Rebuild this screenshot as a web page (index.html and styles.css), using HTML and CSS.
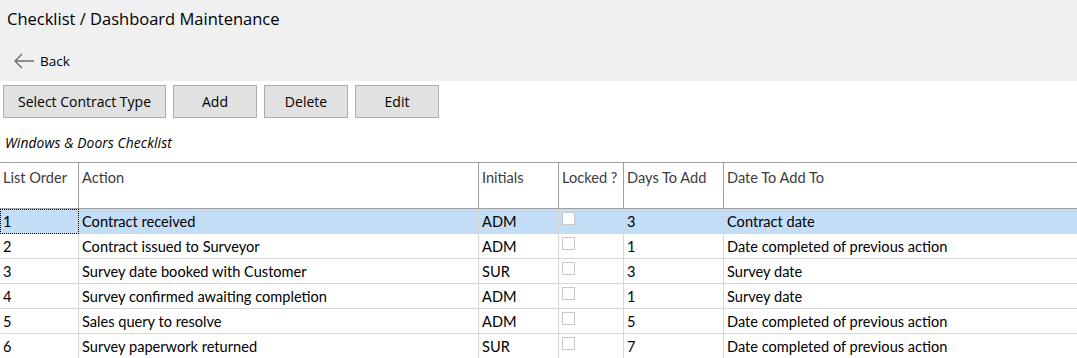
FILE: index.html
```html
<!DOCTYPE html>
<html lang="en">

<head>
    <meta charset="UTF-8">
    <title>Checklist / Dashboard Maintenance</title>
    <link rel="stylesheet" href="styles.css">
</head>

<body>

    <div class="page-header">
        <h1 class="page-title">Checklist / Dashboard Maintenance</h1>
        <a class="back-link" href="#">
            <svg width="22" height="16" viewBox="0 0 22 16">
                <path d="M21 8H2M9 1L2 8l7 7" fill="none" stroke="#6e6e6e" stroke-width="1.4"/>
            </svg>
            <span>Back</span>
        </a>
    </div>

    <div class="toolbar">
        <button class="btn btn-wide">Select Contract Type</button>
        <button class="btn">Add</button>
        <button class="btn">Delete</button>
        <button class="btn">Edit</button>
    </div>

    <p class="caption">Windows &amp; Doors Checklist</p>

    <table class="grid">
        <thead>
            <tr>
                <th class="col-order">List Order</th>
                <th class="col-action">Action</th>
                <th class="col-initials">Initials</th>
                <th class="col-locked">Locked ?</th>
                <th class="col-days">Days To Add</th>
                <th class="col-date">Date To Add To</th>
            </tr>
        </thead>
        <tbody>
            <tr class="selected">
                <td class="focus">1</td>
                <td>Contract received</td>
                <td>ADM</td>
                <td><span class="check"></span></td>
                <td>3</td>
                <td>Contract date</td>
            </tr>
            <tr>
                <td>2</td>
                <td>Contract issued to Surveyor</td>
                <td>ADM</td>
                <td><span class="check"></span></td>
                <td>1</td>
                <td>Date completed of previous action</td>
            </tr>
            <tr>
                <td>3</td>
                <td>Survey date booked with Customer</td>
                <td>SUR</td>
                <td><span class="check"></span></td>
                <td>3</td>
                <td>Survey date</td>
            </tr>
            <tr>
                <td>4</td>
                <td>Survey confirmed awaiting completion</td>
                <td>ADM</td>
                <td><span class="check"></span></td>
                <td>1</td>
                <td>Survey date</td>
            </tr>
            <tr>
                <td>5</td>
                <td>Sales query to resolve</td>
                <td>ADM</td>
                <td><span class="check"></span></td>
                <td>5</td>
                <td>Date completed of previous action</td>
            </tr>
            <tr>
                <td>6</td>
                <td>Survey paperwork returned</td>
                <td>SUR</td>
                <td><span class="check"></span></td>
                <td>7</td>
                <td>Date completed of previous action</td>
            </tr>
        </tbody>
    </table>

</body>

</html>
```

FILE: styles.css
```css
* {
    box-sizing: border-box;
}

body {
    margin: 0;
    padding: 0;
    background: #fff;
    font-family: "Open Sans", "Noto Sans", sans-serif;
    color: #000;
    overflow: hidden;
}

.page-header {
    background: #f0f0f0;
    height: 81px;
    padding: 8px 7px 0;
}

.page-title {
    margin: 0;
    font-size: 16.5px;
    font-weight: normal;
    line-height: 22px;
}

.back-link {
    display: flex;
    align-items: center;
    gap: 5px;
    margin-top: 21px;
    margin-left: 6px;
    color: #000;
    text-decoration: none;
    font-size: 13.5px;
    line-height: 20px;
}

.toolbar {
    display: flex;
    gap: 7px;
    padding: 4px 3px 0;
}

.btn {
    width: 84px;
    height: 33px;
    border: 1px solid #adadad;
    background: #e1e1e1;
    font-family: "Open Sans", "Noto Sans", sans-serif;
    font-size: 14px;
    color: #000;
    padding: 0;
    cursor: pointer;
}

.btn-wide {
    width: 163px;
}

.caption {
    margin: 16px 0 10px 5px;
    font-size: 13.8px;
    font-style: italic;
    line-height: 18px;
    letter-spacing: 0.1px;
}

.grid {
    width: 100%;
    table-layout: fixed;
    border-collapse: separate;
    border-spacing: 0;
    border-top: 1px solid #a0a0a0;
    font-family: Lato, "Open Sans", sans-serif;
    font-size: 14.6px;
}

.grid th,
.grid td {
    text-align: left;
    padding: 0 3px;
    white-space: nowrap;
    overflow: hidden;
}

.grid th {
    height: 46px;
    vertical-align: top;
    padding-top: 6px;
    font-weight: normal;
    color: #3c3c3c;
    border-right: 1px solid #a0a0a0;
    border-bottom: 1px solid #a0a0a0;
}

.grid th:last-child {
    border-right: none;
}

.col-order { width: 79px; }
.col-action { width: 400px; }
.col-initials { width: 80px; }
.col-locked { width: 65px; }
.col-days { width: 100px; }

.grid td {
    height: 25px;
    padding-top: 1px;
    line-height: 23px;
    border-right: 1px solid #d8d8d8;
    border-bottom: 1px solid #d8d8d8;
    vertical-align: top;
}

.grid td:last-child {
    border-right: none;
}

.grid tr.selected td {
    background: #c4ddf7;
}

.grid td.focus {
    outline: 1px dotted #000;
    outline-offset: -1px;
}

.check {
    display: inline-block;
    width: 13px;
    height: 13px;
    margin-top: 2px;
    border: 1px solid #c8c8c8;
    background: #fff;
    vertical-align: top;
}
```
